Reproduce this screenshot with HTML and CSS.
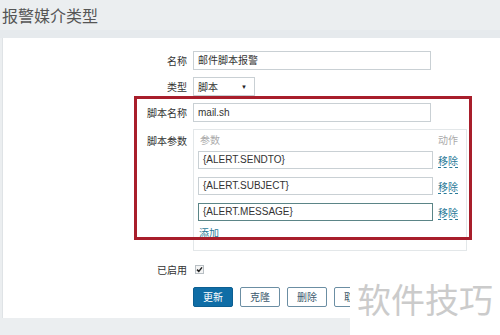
FILE: index.html
```html
<!DOCTYPE html>
<html lang="zh">
<head>
<meta charset="utf-8">
<link rel="stylesheet" href="styles.css">
</head>
<body>
<div class="page">
  <div class="title">报警媒介类型</div>
  <div class="panel">
    <div class="form">
      <div class="lbl">名称</div>
      <div class="field"><div class="txt wide">邮件脚本报警</div></div>

      <div class="lbl">类型</div>
      <div class="field"><div class="select"><span>脚本</span><span class="caret">▼</span></div></div>

      <div class="lbl">脚本名称</div>
      <div class="field"><div class="txt wide">mail.sh</div></div>

      <div class="lbl lbl-top">脚本参数</div>
      <div class="field">
        <div class="params">
          <div class="prow head"><span>参数</span><span>动作</span></div>
          <div class="prow"><div class="txt pin">{ALERT.SENDTO}</div><a class="link">移除</a></div>
          <div class="prow"><div class="txt pin">{ALERT.SUBJECT}</div><a class="link">移除</a></div>
          <div class="prow"><div class="txt pin focus">{ALERT.MESSAGE}</div><a class="link">移除</a></div>
          <div class="add"><a class="link">添加</a></div>
        </div>
      </div>

      <div class="lbl lbl-chk">已启用</div>
      <div class="field chkfield">
        <span class="chk"><svg width="7" height="7" viewBox="0 0 7 7"><path d="M1 3.6 L2.8 5.4 L6 1.4" fill="none" stroke="#222" stroke-width="1.5"/></svg></span>
      </div>

      <div></div>
      <div class="field buttons">
        <span class="btn primary">更新</span>
        <span class="btn">克隆</span>
        <span class="btn">删除</span>
        <span class="btn">取消</span>
      </div>
    </div>
    <div class="annot"></div>
  </div>
  <div class="watermark">软件技巧</div>
</div>
</body>
</html>
```

FILE: styles.css
```css
html, body {
  margin: 0;
  padding: 0;
  height: 100%;
  overflow: hidden;
}
body {
  background: #ebeef0;
  font-family: "Liberation Sans", "Noto Sans CJK SC", sans-serif;
  font-size: 10px;
  color: #333;
}
.page {
  position: relative;
  height: 335px;
}
.title {
  height: 30px;
  line-height: 30px;
  padding-left: 2px;
  font-family: "Noto Sans CJK SC", sans-serif;
  font-size: 16px;
  color: #555;
  border-bottom: 8px solid #e6eaed;
}
.panel {
  position: relative;
  margin-left: 2px;
  background: #fff;
  border-left: 1px solid #dfe3e6;
  padding: 13px 0 11px 0;
}
.form {
  display: grid;
  grid-template-columns: 184px auto;
  column-gap: 6px;
  row-gap: 7px;
  align-items: center;
}
.lbl {
  text-align: right;
  color: #333;
  font-family: "Noto Sans CJK SC", sans-serif;
}
.lbl-top {
  align-self: start;
  margin-top: 4px;
}
.field {
  display: flex;
  align-items: center;
}
.txt {
  box-sizing: border-box;
  height: 19px;
  line-height: 17px;
  border: 1px solid #c9d0d4;
  padding: 0 4px;
  background: #fff;
  color: #333;
  white-space: nowrap;
}
.wide {
  width: 238px;
}
.select {
  box-sizing: border-box;
  width: 62px;
  height: 19px;
  border: 1px solid #c9d0d4;
  padding: 0 4px;
  display: flex;
  align-items: center;
  justify-content: space-between;
}
.caret {
  font-size: 6px;
  color: #222;
  margin-right: 3px;
}
.params {
  box-sizing: border-box;
  width: 274px;
  border: 1px solid #e3e7e9;
  padding: 0 0 10px 4px;
  display: flex;
  flex-direction: column;
  gap: 8px;
}
.prow {
  display: grid;
  grid-template-columns: 235px auto;
  column-gap: 5px;
  align-items: center;
}
.prow.head {
  height: 19px;
  margin-bottom: -6px;
  color: #aaa;
  font-family: "Noto Sans CJK SC", sans-serif;
}
.prow.head span:first-child {
  padding-left: 2px;
}
.pin {
  height: 18px;
  line-height: 16px;
}
.pin.focus {
  border-color: #5b8587;
}
.link {
  color: #2a7a98;
  text-decoration: underline;
  text-decoration-style: dashed;
  text-underline-offset: 2px;
  font-family: "Noto Sans CJK SC", sans-serif;
}
.add {
  height: 14px;
  line-height: 14px;
  margin-top: -3px;
  padding-left: 1px;
}
.lbl-chk {
  margin-top: 4px;
}
.chkfield {
  margin-top: 4px;
  height: 14px;
}
.chk {
  box-sizing: border-box;
  width: 9px;
  height: 9px;
  border: 1px solid #b8bfc4;
  background: #f4f4f4;
  margin-left: 2px;
  display: flex;
  align-items: center;
  justify-content: center;
}
.buttons {
  gap: 7px;
  margin-top: 3px;
}
.btn {
  box-sizing: border-box;
  height: 20px;
  line-height: 18px;
  padding: 0 9px;
  border: 1px solid #6b8ea3;
  border-radius: 2px;
  background: #fff;
  color: #3c5a6e;
  font-family: "Noto Sans CJK SC", sans-serif;
}
.btn.primary {
  background: #0f6da6;
  border-color: #0c5f92;
  color: #fff;
}
.annot {
  position: absolute;
  left: 131px;
  top: 58px;
  width: 332px;
  height: 138px;
  border: 3px solid #a81e2b;
  pointer-events: none;
}
.watermark {
  position: absolute;
  left: 350px;
  top: 281px;
  right: 0;
  bottom: 0;
  background: #fff;
  color: #cbcbcb;
  font-family: "Noto Sans CJK SC", sans-serif;
  font-size: 34px;
  line-height: 36px;
  padding-left: 7px;
}
```
